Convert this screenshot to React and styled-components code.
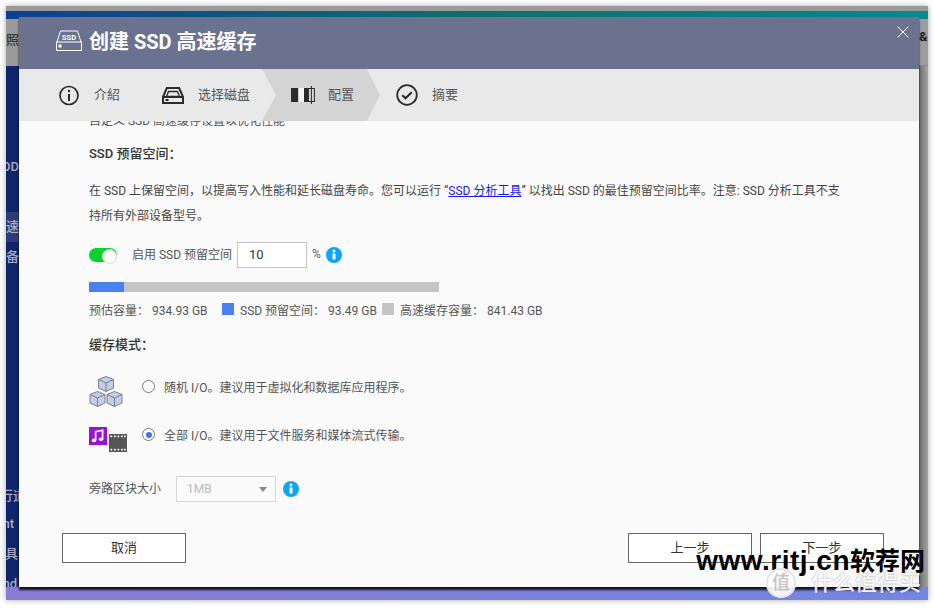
import React from "react";
import styled, { createGlobalStyle } from "styled-components";

const GlobalStyle = createGlobalStyle`
  html, body { margin: 0; background: #fff; }
  body { font-family: Roboto, "Noto Sans CJK SC", sans-serif; color: #444; }
  * { box-sizing: border-box; }
`;

const steps = [
  { label: "介紹", icon: <InfoOutline />, width: 103 },
  { label: "选择磁盘", icon: <DiskIcon />, width: 100 },
  { label: "配置", icon: <ConfigIcon />, active: true },
  { label: "摘要", icon: <CheckIcon />, width: 100 },
];

const sideItems = [
  { text: "OD", top: 86 },
  { text: "速", top: 30, hl: true },
  { text: "备", top: 0 },
  { text: "行道", top: 209, shift: 7 },
  { text: "nt", top: -2, shift: -5 },
  { text: "具", top: 0, shift: -1 },
  { text: "nd", top: 0, shift: -2 },
];

function InfoOutline() {
  return (
    <svg width="21" height="21" viewBox="0 0 21 21" fill="none" stroke="#2b2b2b" strokeWidth="1.7">
      <circle cx="10" cy="10.5" r="9" />
      <path d="M10 9v7" strokeWidth="2" />
      <circle cx="10" cy="6" r="1.2" fill="#2b2b2b" stroke="none" />
    </svg>
  );
}

function DiskIcon() {
  return (
    <svg width="22" height="17" viewBox="0 0 22 17" fill="none" stroke="#2b2b2b" strokeWidth="2">
      <path d="M1 10 4.8 1h12.4L21 10v6H1z" />
      <path d="M4.5 9.5l2-5h9l2 5z" strokeWidth="1.3" />
      <path d="M1 10h20" />
      <rect x="3.5" y="12" width="3" height="2" fill="#2b2b2b" stroke="none" />
    </svg>
  );
}

function ConfigIcon() {
  return (
    <svg width="24" height="18" viewBox="0 0 24 18">
      <rect x="0" y="2" width="7.4" height="14" fill="#2b2b2b" />
      <rect x="7.4" y="2" width="5.6" height="14" fill="#f4f4f4" />
      <rect x="13" y="2" width="4.4" height="14" fill="#2b2b2b" />
      <rect x="17.4" y="2.5" width="6" height="13" fill="none" stroke="#2b2b2b" strokeWidth="1" />
      <path d="M20.4 0v18" stroke="#2b2b2b" strokeWidth="1" />
    </svg>
  );
}

function CheckIcon() {
  return (
    <svg width="22" height="22" viewBox="0 0 22 22" fill="none" stroke="#2b2b2b" strokeWidth="1.8">
      <circle cx="11" cy="11" r="9.8" />
      <path d="M6.3 11.3l3.2 3 6.2-6" strokeWidth="2.2" />
    </svg>
  );
}

function SsdLogo() {
  return (
    <svg width="26" height="21" viewBox="0 0 26 21" fill="none" stroke="#fff" strokeWidth="1">
      <path d="M1 12 4.5 1h17L25 12" />
      <rect x="0.5" y="12" width="25" height="8.5" />
      <rect x="2.5" y="14.5" width="3" height="3" fill="#fff" stroke="none" />
      <text x="13" y="10" textAnchor="middle" fontSize="7.6" fontWeight="700" fill="#fff" stroke="none" fontFamily="Roboto, sans-serif">SSD</text>
    </svg>
  );
}

function InfoBadge() {
  return (
    <svg width="16" height="16" viewBox="0 0 16 16">
      <circle cx="8" cy="8" r="8" fill="#0ba5f5" />
      <circle cx="8" cy="4" r="1.5" fill="#fff" />
      <path d="M6.5 6.5h3v6h-3z" fill="#fff" />
    </svg>
  );
}

function Cube({ x, y }) {
  return (
    <g transform={`translate(${x} ${y})`} stroke="#6d7583" strokeWidth="0.9" strokeLinejoin="round">
      <path d="M7.5 0 15 3v8.5L7.5 15 0 11.5V3z" fill="#c3cde4" />
      <path d="M0 3l7.5 3.5L15 3M7.5 6.5V15" fill="none" />
    </g>
  );
}

function CubesIcon() {
  return (
    <svg width="34" height="31" viewBox="0 0 34 31">
      <Cube x={9.5} y={0.5} />
      <Cube x={1} y={15.5} />
      <Cube x={18} y={15.5} />
    </svg>
  );
}

function MediaIcon() {
  return (
    <svg width="38" height="25" viewBox="0 0 38 25">
      <rect x="0" y="0" width="18" height="18" fill="#9a10d8" />
      <path d="M6.6 13V4.6L13.6 3.2v8.6" fill="none" stroke="#fff" strokeWidth="1.7" />
      <ellipse cx="5" cy="13.4" rx="2.3" ry="1.8" fill="#fff" />
      <ellipse cx="12" cy="12.2" rx="2.3" ry="1.8" fill="#fff" />
      <rect x="20" y="7" width="18" height="18" fill="#555" />
      {[21.5, 25, 28.5, 32, 35].map((x) => (
        <g key={x} fill="#fff">
          <rect x={x} y="8.5" width="1.7" height="1.7" />
          <rect x={x} y="21.8" width="1.7" height="1.7" />
        </g>
      ))}
    </svg>
  );
}

function Watermark() {
  return (
    <MarkWrap>
      <MarkTop>
        www.rjtj.cn<MarkCjk>软荐网</MarkCjk>
      </MarkTop>
      <MarkBottom>
        <MarkSeal>值</MarkSeal>
        什么值得买
      </MarkBottom>
    </MarkWrap>
  );
}

export default function App() {
  return (
    <Page>
      <GlobalStyle />
      <AppWindow>
        <TopStripe />
        <GradientBar />
        <WindowBody>
          <Sidebar>
            <SideHead>·照</SideHead>
            {sideItems.map((s) => (
              <SideItem key={s.text} $top={s.top} $hl={s.hl} $shift={s.shift}>
                {s.text}
              </SideItem>
            ))}
          </Sidebar>
          <RightEdge>
            <RightHead>&amp;</RightHead>
          </RightEdge>
        </WindowBody>
        <BottomStrip />

        <Dialog>
          <Header>
            <SsdLogo />
            <Title>创建 SSD 高速缓存</Title>
            <CloseBtn aria-label="close">
              <svg width="12" height="12" viewBox="0 0 12 12" stroke="#fff" strokeWidth="1" fill="none">
                <path d="M0.5 0.5l11 11M11.5 0.5l-11 11" />
              </svg>
            </CloseBtn>
          </Header>

          <StepBar>
            {steps.map((s) => (
              <Step key={s.label} $w={s.width} $active={s.active}>
                <StepIcon>{s.icon}</StepIcon>
                <StepLabel>{s.label}</StepLabel>
              </Step>
            ))}
          </StepBar>

          <Body>
            <ClippedLine>自定义 SSD 高速缓存设置以优化性能</ClippedLine>
            <Heading>SSD 预留空间：</Heading>
            <Para>
              在 SSD 上保留空间，以提高写入性能和延长磁盘寿命。您可以运行 “<DocLink>SSD 分析工具</DocLink>” 以找出 SSD 的最佳预留空间比率。注意: SSD 分析工具不支持所有外部设备型号。
            </Para>

            <ToggleRow>
              <Toggle />
              <ToggleLabel>启用 SSD 预留空间</ToggleLabel>
              <NumberBox>10</NumberBox>
              <Percent>%</Percent>
              <InfoBadge />
            </ToggleRow>

            <Bar>
              <BarFill style={{ width: `${(93.49 / 934.93) * 100}%` }} />
            </Bar>

            <Legend>
              <LegendItem $w={133}>预估容量：<LegendValue>934.93 GB</LegendValue></LegendItem>
              <Swatch $c="#4a80ef" />
              <LegendItem $w={142}>SSD 预留空间：<LegendValue>93.49 GB</LegendValue></LegendItem>
              <Swatch $c="#c4c4c4" />
              <LegendItem>高速缓存容量：<LegendValue>841.43 GB</LegendValue></LegendItem>
            </Legend>

            <ModeHeading>缓存模式：</ModeHeading>

            <ModeRow $h={31} $mt={21}>
              <ModeIcon><CubesIcon /></ModeIcon>
              <Radio />
              <ModeText>随机 I/O。建议用于虚拟化和数据库应用程序。</ModeText>
            </ModeRow>
            <ModeRow $h={27} $mt={19}>
              <ModeIcon><MediaIcon /></ModeIcon>
              <Radio $on />
              <ModeText>全部 I/O。建议用于文件服务和媒体流式传输。</ModeText>
            </ModeRow>

            <BypassRow>
              <BypassLabel>旁路区块大小</BypassLabel>
              <SelectBox>
                1MB
                <Caret />
              </SelectBox>
              <InfoBadge />
            </BypassRow>

            <Footer>
              <Btn>取消</Btn>
              <FooterRight>
                <Btn>上一步</Btn>
                <Btn>下一步</Btn>
              </FooterRight>
            </Footer>
          </Body>
        </Dialog>

        <Watermark />
      </AppWindow>
    </Page>
  );
}

const Page = styled.div`
  width: 934px;
  height: 608px;
  padding: 6px;
  overflow: hidden;
`;

const AppWindow = styled.div`
  position: relative;
  width: 922px;
  height: 594px;
  display: flex;
  flex-direction: column;
  box-shadow: 0 0 6px rgba(0, 0, 0, 0.35);
`;

const TopStripe = styled.div`
  height: 5px;
  background: #9a9a9a;
`;

const GradientBar = styled.div`
  height: 8px;
  background: linear-gradient(90deg, #0f3f90 0%, #0f6e70 50%, #048a8e 100%);
`;

const WindowBody = styled.div`
  flex: 1;
  display: flex;
  justify-content: space-between;
  min-height: 0;
`;

const Sidebar = styled.div`
  width: 13px;
  overflow: hidden;
  background: #10246c;
  display: flex;
  flex-direction: column;
  align-items: flex-end;
  font-size: 13px;
  font-weight: 500;
  color: #a9adbd;
`;

const SideHead = styled.div`
  flex: none;
  width: 13px;
  height: 47px;
  background: #9a9a9a;
  color: #333;
  white-space: nowrap;
  display: flex;
  justify-content: flex-end;
  align-items: flex-start;
  padding-top: 10px;
`;

const SideItem = styled.div`
  flex: none;
  width: 13px;
  height: 30px;
  line-height: 30px;
  margin-top: ${(p) => p.$top}px;
  white-space: nowrap;
  display: flex;
  justify-content: flex-end;
  background: ${(p) => (p.$hl ? "#2f3c78" : "transparent")};
  ${(p) => p.$shift && `transform: translateX(${p.$shift}px);`}
`;

const RightEdge = styled.div`
  width: 9px;
  background: linear-gradient(90deg, #6d6d6d, #a3a3a3);
`;

const RightHead = styled.div`
  height: 47px;
  border-bottom: 1px solid #888;
  background: #9c9c9c;
  font-size: 13px;
  font-weight: 700;
  color: #222;
  padding-top: 10px;
  overflow: hidden;
`;

const BottomStrip = styled.div`
  height: 13px;
  background: linear-gradient(90deg, #8a7bd3, #7485e2);
`;

const Dialog = styled.div`
  position: absolute;
  left: 13px;
  top: 11px;
  width: 900px;
  height: 570px;
  display: flex;
  flex-direction: column;
  background: #fafafa;
  box-shadow: 0 3px 2px rgba(0, 0, 0, 0.85);
`;

const Header = styled.div`
  position: relative;
  flex: none;
  height: 52px;
  background: #6b728f;
  display: flex;
  align-items: center;
  padding: 0 0 5px 37px;
  gap: 7px;
`;

const Title = styled.h1`
  margin: 0;
  font-size: 20px;
  font-weight: 700;
  color: #fff;
`;

const CloseBtn = styled.button`
  position: absolute;
  right: 10px;
  top: 9px;
  padding: 0;
  border: 0;
  background: none;
  line-height: 0;
`;

const StepBar = styled.div`
  flex: none;
  height: 52px;
  background: #e9e9e9;
  display: flex;
  align-items: stretch;
  padding-left: 40px;
`;

const Step = styled.div`
  width: ${(p) => p.$w}px;
  display: flex;
  align-items: center;
  gap: 14px;
  ${(p) =>
    p.$active &&
    `
    background: #d4d4d4;
    clip-path: polygon(0 0, 105px 0, 118px 50%, 105px 100%, 0 100%, 14px 50%);
    width: 118px;
    padding-left: 29px;
    margin-right: 16px;
    gap: 13px;
  `}
`;

const StepIcon = styled.span`
  flex: none;
  display: flex;
  align-items: center;
`;

const StepLabel = styled.span`
  font-size: 13px;
  padding-bottom: 4px;
  color: #555;
  white-space: nowrap;
`;

const Body = styled.div`
  flex: 1;
  min-height: 0;
  overflow: hidden;
  padding: 0 35px 0 70px;
`;

const ClippedLine = styled.div`
  margin-top: -9px;
  height: 18px;
  line-height: 18px;
  font-size: 12px;
  color: #555;
`;

const Heading = styled.div`
  margin-top: 14px;
  height: 20px;
  line-height: 20px;
  font-size: 13px;
  font-weight: 500;
  color: #333;
`;

const Para = styled.p`
  margin: 15px 0 0;
  width: 760px;
  font-size: 12px;
  line-height: 25px;
  color: #444;
`;

const DocLink = styled.a`
  color: #1a1ae6;
  text-decoration: underline;
`;

const ToggleRow = styled.div`
  margin-top: 13px;
  height: 26px;
  display: flex;
  align-items: center;
`;

const Toggle = styled.span`
  position: relative;
  width: 28px;
  height: 14px;
  border-radius: 7px;
  background: #06d42c;
  margin-right: 15px;
  &::after {
    content: "";
    position: absolute;
    right: 0.5px;
    top: 0.5px;
    width: 13px;
    height: 13px;
    border-radius: 50%;
    border: 1px solid #dcdcdc;
    background: #fff;
  }
`;

const ToggleLabel = styled.span`
  font-size: 12px;
  padding-bottom: 3px;
  color: #555;
  width: 105px;
  white-space: nowrap;
`;

const NumberBox = styled.div`
  width: 70px;
  height: 26px;
  border: 1px solid #c4c4c4;
  background: #fff;
  padding-left: 11px;
  line-height: 24px;
  font-size: 13px;
  color: #333;
`;

const Percent = styled.span`
  margin: 0 5px 0 5px;
  padding-bottom: 3px;
  font-size: 12px;
  color: #666;
`;

const Bar = styled.div`
  margin-top: 14px;
  width: 350px;
  height: 10px;
  background: #c4c4c4;
`;

const BarFill = styled.div`
  height: 100%;
  background: #4a80ef;
`;

const Legend = styled.div`
  margin-top: 8px;
  height: 18px;
  display: flex;
  align-items: center;
  font-size: 12px;
  color: #555;
`;

const LegendItem = styled.span`
  width: ${(p) => (p.$w ? `${p.$w}px` : "auto")};
  white-space: nowrap;
`;

const LegendValue = styled.span`
  margin-left: 3px;
`;

const Swatch = styled.span`
  width: 12px;
  height: 12px;
  margin-right: 6px;
  background: ${(p) => p.$c};
`;

const ModeHeading = styled(Heading)`
  margin-top: 17px;
`;

const ModeRow = styled.div`
  margin-top: ${(p) => p.$mt}px;
  height: ${(p) => p.$h}px;
  display: flex;
  align-items: center;
`;

const ModeIcon = styled.span`
  width: 53px;
  display: flex;
  align-items: center;
  flex: none;
`;

const Radio = styled.span`
  flex: none;
  position: relative;
  width: 13px;
  height: 13px;
  margin-top: -10px;
  border-radius: 50%;
  border: 1px solid #777;
  background: #fff;
  margin-right: 9px;
  ${(p) =>
    p.$on &&
    `
    &::after {
      content: "";
      position: absolute;
      left: 2.5px;
      top: 2.5px;
      width: 6px;
      height: 6px;
      border-radius: 50%;
      background: #3b78e7;
    }
  `}
`;

const ModeText = styled.span`
  margin-top: -10px;
  font-size: 12px;
  color: #555;
`;

const BypassRow = styled.div`
  margin-top: 23px;
  height: 26px;
  display: flex;
  align-items: center;
`;

const BypassLabel = styled.span`
  width: 87px;
  padding-bottom: 3px;
  font-size: 12px;
  color: #555;
`;

const SelectBox = styled.div`
  position: relative;
  width: 100px;
  height: 26px;
  margin-right: 7px;
  border: 1px solid #d6d6d6;
  padding-left: 10px;
  line-height: 24px;
  font-size: 12px;
  color: #bbb;
`;

const Caret = styled.span`
  position: absolute;
  right: 8px;
  top: 10px;
  border-left: 4px solid transparent;
  border-right: 4px solid transparent;
  border-top: 5px solid #888;
`;

const Footer = styled.div`
  margin: 31px 0 0 -27px;
  display: flex;
  justify-content: space-between;
`;

const FooterRight = styled.div`
  display: flex;
  gap: 8px;
`;

const Btn = styled.button`
  width: 124px;
  height: 30px;
  padding: 0 0 3px;
  border: 1px solid #666;
  background: #fff;
  font-family: inherit;
  font-size: 13px;
  color: #333;
`;

const MarkWrap = styled.div`
  position: absolute;
  right: 3px;
  bottom: 2px;
  display: flex;
  flex-direction: column;
  align-items: flex-end;
  pointer-events: none;
`;

const MarkTop = styled.div`
  font-family: "Liberation Sans", "Noto Sans CJK SC", sans-serif;
  font-size: 28px;
  font-weight: 700;
  letter-spacing: 0.5px;
  line-height: 28px;
  color: #000;
  white-space: nowrap;
`;

const MarkCjk = styled.span`
  font-size: 25px;
  letter-spacing: 0;
`;

const MarkBottom = styled.div`
  display: flex;
  align-items: center;
  gap: 15px;
  margin-top: -7px;
  padding-right: 4px;
  font-size: 22px;
  font-weight: 500;
  line-height: 26px;
  color: rgba(255, 255, 255, 0.92);
  text-shadow: 0 0 2px rgba(110, 110, 110, 0.6);
  white-space: nowrap;
`;

const MarkSeal = styled.span`
  width: 30px;
  height: 30px;
  border-radius: 50%;
  background: rgba(255, 255, 255, 0.92);
  box-shadow: inset 0 0 0 2px #e4e4e4;
  color: #c4c4c4;
  font-size: 18px;
  line-height: 30px;
  text-align: center;
  text-shadow: none;
`;
